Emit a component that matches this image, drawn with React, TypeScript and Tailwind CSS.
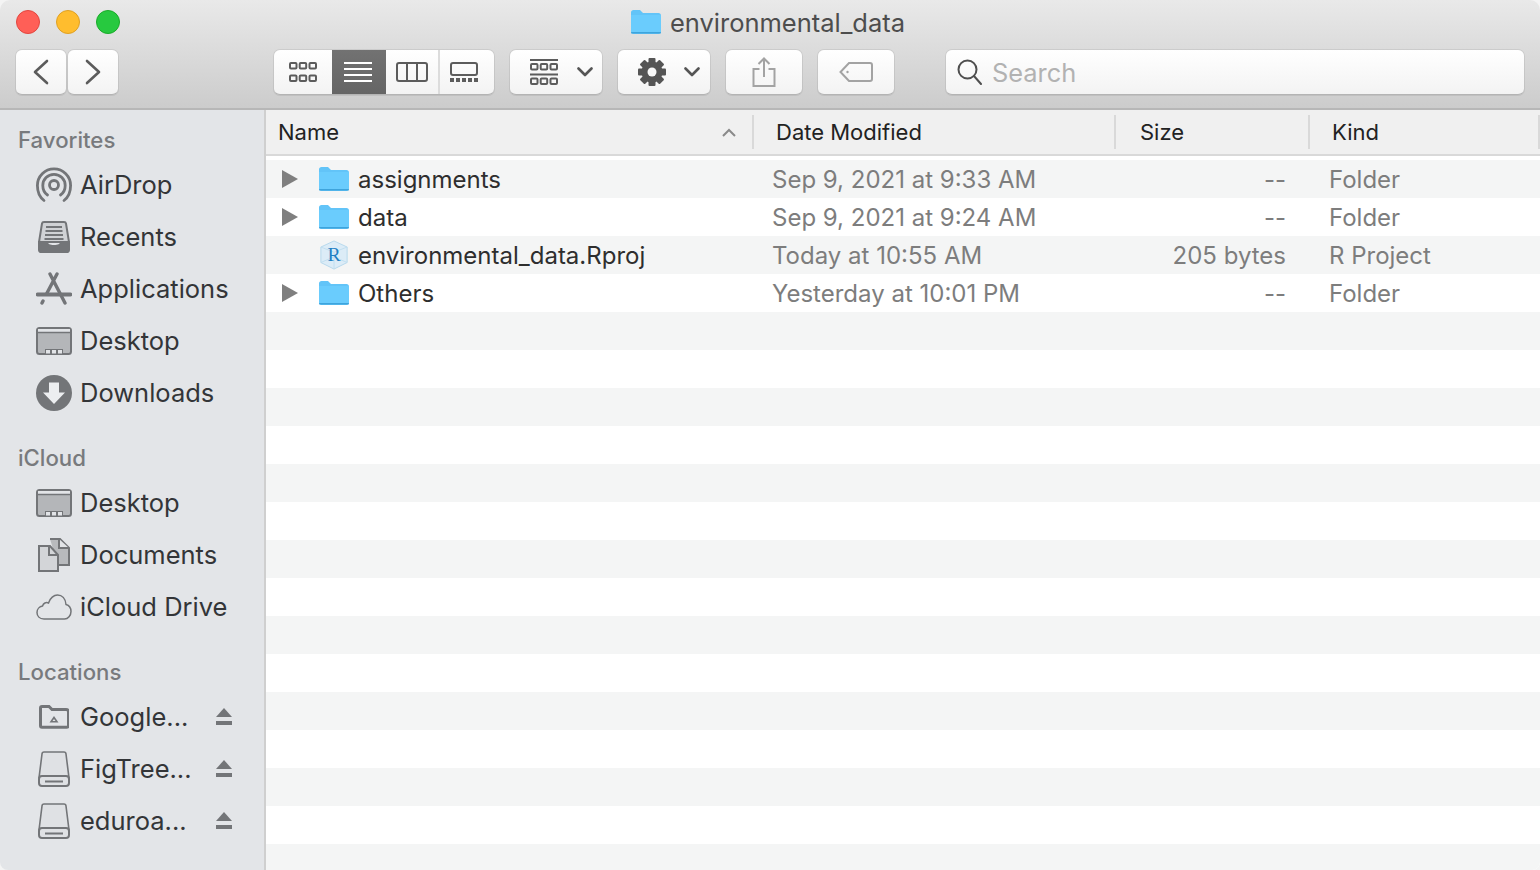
import type { ReactNode } from "react";

const btn =
  "flex h-[45px] items-center rounded-[6px] border-b border-[#b4b4b4] bg-gradient-to-b from-white to-[#f3f3f3] shadow-[0_0_0_1px_rgba(0,0,0,0.07)]";

function FolderIcon({ w = 30, h = 24 }: { w?: number; h?: number }) {
  return (
    <svg width={w} height={h} viewBox="0 0 30 24">
      <path d="M0 2.500C0 1 1 0 2.500 0h6.500l3 3h15.500C29 3 30 4 30 5.500v16c0 1.500-1 2.500-2.500 2.500h-25C1 24 0 23 0 21.500Z" fill="#62c4f8" />
      <path d="M0 5h30v16.500c0 1-.8 1.500-1.700 1.500H1.700C.8 23 0 22.500 0 21.500Z" fill="#6accfd" />
      <rect x="0" y="22" width="30" height="1.500" rx=".7" fill="#3ea4dc" />
    </svg>
  );
}

function RprojIcon() {
  return (
    <svg width="30" height="30" viewBox="0 0 32 32">
      <path d="M16 1 30 7.500V24L16 31 2 24V7.500Z" fill="#dcecf7" stroke="#b5d8ec" />
      <path d="M2 7.500 16 13l14-5.500M16 13v18M2 24l14-6 14 6" fill="none" stroke="#c0deef" />
      <text x="16" y="22" textAnchor="middle" fontSize="21" fill="#1f80c4" fontFamily="Liberation Serif, serif">
        R
      </text>
    </svg>
  );
}

function Tri() {
  return (
    <svg width="16" height="18" viewBox="0 0 16 18">
      <path d="M0 0 16 9 0 18Z" fill="#7f7f7f" />
    </svg>
  );
}

function AirDropIcon() {
  return (
    <svg width="36" height="36" viewBox="0 0 36 36" fill="none" stroke="#737578" strokeWidth="2.800" strokeLinecap="round">
      <path d="M8 33.500C3.500 30 1.400 24.500 1.400 18.500a16.600 16.600 0 0 1 33.200 0c0 6-2.100 11.500-6.600 15" />
      <path d="M11.500 28C8.500 26 6.800 22.500 6.800 18.500a11.200 11.200 0 0 1 22.400 0c0 4-1.700 7.500-4.700 9.500" />
      <circle cx="18" cy="18" r="4.500" />
    </svg>
  );
}

function RecentsIcon() {
  return (
    <svg width="32" height="32" viewBox="0 0 32 32" fill="none">
      <path d="M4 2.500C4.200 1.500 5 1 6 1h20c1 0 1.800.5 2 1.500L31 21H1Z" fill="#d0d2d5" stroke="#737578" strokeWidth="2" />
      <path d="M8 6h16M7.500 10h17M7 14h18M6.500 18h19" stroke="#737578" strokeWidth="1.800" />
      <path d="M0 20h9c1 3 3 4 7 4s6-1 7-4h9v9c0 1.500-1 3-2.500 3h-27C1 32 0 30.500 0 29Z" fill="#737578" />
    </svg>
  );
}

function ApplicationsIcon() {
  return (
    <svg width="36" height="34" viewBox="0 0 36 34" fill="none" stroke="#737578" strokeLinecap="round">
      <path d="M14 2 29 31M21 2 11 21M7 29l-1 2" strokeWidth="3.400" />
      <path d="M1.500 22.500h33" strokeWidth="3.800" />
    </svg>
  );
}

function DesktopIcon() {
  return (
    <svg width="36" height="28" viewBox="0 0 36 28">
      <rect x="1" y="1" width="34" height="26" rx="2.500" fill="#b4b6b9" stroke="#737578" strokeWidth="2" />
      <rect x="2" y="2" width="32" height="3" fill="#e2e4e7" />
      <path d="M2 5.500h32" stroke="#737578" strokeWidth="1.500" />
      <path d="M9 27v-5h18v5Z" fill="#737578" />
      <path d="M10 23h4v3.500h-4ZM16 23h4v3.500h-4ZM22 23h4v3.500h-4Z" fill="#e2e4e7" />
    </svg>
  );
}

function DownloadsIcon() {
  return (
    <svg width="36" height="36" viewBox="0 0 36 36">
      <circle cx="18" cy="18" r="18" fill="#737578" />
      <path d="M13 7.500h10v10h6L18 29 7 17.500h6Z" fill="#eceef0" />
    </svg>
  );
}

function DocumentsIcon() {
  return (
    <svg width="32" height="34" viewBox="0 0 32 34" fill="none" stroke="#737578" strokeWidth="2">
      <path d="M12 1h10l9 9v17H20" fill="#b8babd" />
      <path d="M21 1v9h10" fill="#e2e4e7" />
      <path d="M1 8h11l8 9v16H1Z" fill="#d3d5d8" />
      <path d="M11 8v9h9" />
    </svg>
  );
}

function CloudIcon() {
  return (
    <svg width="36" height="26" viewBox="0 0 36 26" fill="none">
      <path
        d="M8 25C3.500 25 1 22 1 18.500c0-3.500 2.500-6 5.500-6.500C7.500 9 10 8 12.500 9 14 4 18 1 21.500 1c4.500 0 8 3.500 8.500 9.500 3.500 1 5 4 5 7 0 4-3 7.500-6.500 7.500Z"
        stroke="#737578"
        strokeWidth="1.500"
      />
    </svg>
  );
}

function DriveFolderIcon() {
  return (
    <svg width="30" height="24" viewBox="0 0 30 24" fill="none">
      <path d="M1.500 3c0-1 .6-1.500 1.500-1.500h7l3 3h14c1.200 0 2.500.6 2.500 2v14c0 1.200-.8 1.800-2 1.800H3c-1.200 0-1.500-.6-1.500-1.800Z" stroke="#737578" strokeWidth="3" />
      <path d="M15 11 19.500 17.500h-9Z" fill="#737578" />
      <path d="M15 14 16.500 16h-3Z" fill="#e3e5e8" />
    </svg>
  );
}

function DiskIcon() {
  return (
    <svg width="32" height="36" viewBox="0 0 32 36" fill="none">
      <path d="M4 3c.1-1.200 1-2 2-2h20c1 0 1.900.8 2 2l3 24H1Z" fill="#dfe1e4" stroke="#737578" strokeWidth="1.600" />
      <rect x="1" y="25" width="30" height="10" rx="3" fill="#dfe1e4" stroke="#737578" strokeWidth="2" />
      <path d="M7 30.500h18" stroke="#737578" strokeWidth="2" />
    </svg>
  );
}

function EjectIcon() {
  return (
    <svg width="16" height="18" viewBox="0 0 16 18">
      <path d="M8 0 16 9H0Z" fill="#737578" />
      <rect x="0" y="13" width="16" height="4" fill="#737578" />
    </svg>
  );
}

function Chevron({ dir }: { dir: "left" | "right" }) {
  return (
    <svg width="16" height="26" viewBox="0 0 16 26" fill="none" stroke="#5c5c5c" strokeWidth="2.600" strokeLinecap="round" strokeLinejoin="round">
      <path d={dir === "left" ? "M14 2 2 13l12 11" : "M2 2l12 11L2 24"} />
    </svg>
  );
}

function Caret() {
  return (
    <svg width="16" height="10" viewBox="0 0 16 10" fill="none" stroke="#555" strokeWidth="2.600" strokeLinecap="round" strokeLinejoin="round">
      <path d="M1.500 1.500 8 8l6.500-6.500" />
    </svg>
  );
}

function SmallSquares({ y }: { y: number }) {
  return (
    <g fill="none" stroke="#5c5c5c" strokeWidth="2">
      <rect x="1" y={y} width="6.500" height="5.500" rx="1" />
      <rect x="10.700" y={y} width="6.500" height="5.500" rx="1" />
      <rect x="20.500" y={y} width="6.500" height="5.500" rx="1" />
    </g>
  );
}

function GearIcon() {
  const teeth = [0, 45, 90, 135];
  return (
    <svg width="28" height="28" viewBox="0 0 28 28">
      {teeth.map((a) => (
        <rect key={a} x="10.500" y="0" width="7" height="28" rx="1" fill="#555" transform={`rotate(${a} 14 14)`} />
      ))}
      <circle cx="14" cy="14" r="10.500" fill="#555" />
      <circle cx="14" cy="14" r="4.500" fill="#f8f8f8" />
    </svg>
  );
}

function ToolButton({ width, children }: { width: string; children: ReactNode }) {
  return <div className={`${btn} ${width} justify-center`}>{children}</div>;
}

function SidebarHeading({ children, className = "" }: { children: ReactNode; className?: string }) {
  return (
    <div className={`flex h-[38px] items-center pl-[18px] text-[22.200px] font-medium text-[#787a7d] ${className}`}>{children}</div>
  );
}

function SidebarRow({ icon, label, eject }: { icon: ReactNode; label: string; eject?: boolean }) {
  return (
    <div className="flex h-[52px] items-center pr-[32px]">
      <div className="flex w-[80px] shrink-0 items-center justify-center pl-[28px]">{icon}</div>
      <span className="flex-1 text-[25.500px] text-[#333538]">{label}</span>
      {eject && <EjectIcon />}
    </div>
  );
}

const files = [
  { name: "assignments", date: "Sep 9, 2021 at 9:33 AM", size: "--", kind: "Folder", folder: true },
  { name: "data", date: "Sep 9, 2021 at 9:24 AM", size: "--", kind: "Folder", folder: true },
  { name: "environmental_data.Rproj", date: "Today at 10:55 AM", size: "205 bytes", kind: "R Project", folder: false },
  { name: "Others", date: "Yesterday at 10:01 PM", size: "--", kind: "Folder", folder: true },
];

const stripes = [0, 1, 2, 3, 4, 5, 6, 7, 8, 9, 10, 11, 12, 13, 14, 15, 16, 17];

export default function App() {
  return (
    <div className="h-[870px] w-[1540px] overflow-hidden bg-[#f4f4f4] font-['Inter','Liberation_Sans',sans-serif]">
      <div className="flex h-full flex-col overflow-hidden rounded-t-[10px] rounded-b-[8px]">
        <header className="h-[110px] shrink-0 border-b-2 border-[#b7b7b7] bg-gradient-to-b from-[#e9e9e9] to-[#cccccc]">
          <div className="grid h-[50px] grid-cols-[1fr_auto_1fr] items-center pb-[6px]">
            <div className="flex gap-[16px] pl-[16px]">
              <span className="h-[24px] w-[24px] rounded-full border border-[#e2463f] bg-[#ff5f57]" />
              <span className="h-[24px] w-[24px] rounded-full border border-[#dfa023] bg-[#ffbd2e]" />
              <span className="h-[24px] w-[24px] rounded-full border border-[#1aab29] bg-[#27c93f]" />
            </div>
            <div className="flex items-center gap-[9px] pr-[4px] text-[25.500px] text-[#4d4d4d]">
              <FolderIcon />
              <span className="pt-[2px]">environmental_data</span>
            </div>
            <div />
          </div>
          <div className="flex h-[45px] pl-[16px]">
            <div className="flex gap-[2px]">
              <ToolButton width="w-[50px]">
                <Chevron dir="left" />
              </ToolButton>
              <ToolButton width="w-[50px]">
                <Chevron dir="right" />
              </ToolButton>
            </div>
            <div className={`${btn} ml-[156px] w-[220px] overflow-hidden`}>
              <div className="flex h-full w-[58px] items-center justify-center">
                <svg width="28" height="20" viewBox="0 0 28 20">
                  <SmallSquares y={1} />
                  <SmallSquares y={13.500} />
                </svg>
              </div>
              <div className="flex h-full w-[54px] items-center justify-center bg-gradient-to-b from-[#727272] to-[#656565] pr-[2px]">
                <svg width="28" height="20" viewBox="0 0 28 20" stroke="#fff" strokeWidth="2">
                  <path d="M0 1h28M0 7h28M0 13h28M0 19h28" />
                </svg>
              </div>
              <div className="flex h-full w-[54px] items-center justify-center border-r-2 border-[#dcdcdc]">
                <svg width="32" height="20" viewBox="0 0 32 20" fill="none" stroke="#5c5c5c" strokeWidth="2">
                  <rect x="1" y="1" width="30" height="18" rx="2" />
                  <path d="M11 1v18M21 1v18" />
                </svg>
              </div>
              <div className="flex h-full flex-1 items-center justify-center pr-[6px]">
                <svg width="28" height="20" viewBox="0 0 28 20">
                  <rect x="1" y="1" width="26" height="12" rx="2" fill="none" stroke="#5c5c5c" strokeWidth="2" />
                  <path d="M0 16h4v4H0ZM6 16h4v4H6ZM12 16h4v4h-4ZM18 16h4v4h-4ZM24 16h4v4h-4Z" fill="#5c5c5c" />
                </svg>
              </div>
            </div>
            <div className={`${btn} ml-[16px] w-[92px] gap-[19px] pl-[20px]`}>
              <svg width="28" height="26" viewBox="0 0 28 26">
                <path d="M0 1h28M0 15.500h28" stroke="#5c5c5c" strokeWidth="2" />
                <SmallSquares y={5} />
                <SmallSquares y={19.500} />
              </svg>
              <Caret />
            </div>
            <div className={`${btn} ml-[16px] w-[92px] gap-[18px] pl-[20px]`}>
              <GearIcon />
              <Caret />
            </div>
            <ToolButton width="ml-[16px] w-[76px]">
              <svg width="24" height="30" viewBox="0 0 24 30" fill="none" stroke="#a3a3a3" strokeWidth="2">
                <path d="M7.500 12H1.500v17h21V12h-6" />
                <path d="M12 20V1.500M6.500 7 12 1.500 17.500 7" />
              </svg>
            </ToolButton>
            <ToolButton width="ml-[16px] w-[76px]">
              <svg width="34" height="20" viewBox="0 0 34 20" fill="none" stroke="#a3a3a3" strokeWidth="2">
                <path d="M10 1h21c1.200 0 2 .8 2 2v14c0 1.200-.8 2-2 2H10L1.500 10Z" />
                <circle cx="8.500" cy="10" r="1.200" fill="#a3a3a3" stroke="none" />
              </svg>
            </ToolButton>
            <div className={`${btn} ml-[52px] w-[578px] gap-[10px] pl-[11px]`}>
              <svg width="25" height="26" viewBox="0 0 25 26" fill="none" stroke="#4f4f4f" strokeWidth="2">
                <circle cx="10.500" cy="10.500" r="9" />
                <path d="m17 17 7 8" strokeLinecap="round" />
              </svg>
              <span className="pt-[2px] text-[25.400px] text-[#b2b2b2]">Search</span>
            </div>
          </div>
        </header>

        <div className="flex min-h-0 flex-1">
          <aside className="w-[266px] shrink-0 border-r-2 border-[#cfcfcf] bg-[#e3e5e8] pt-[11px]">
            <SidebarHeading>Favorites</SidebarHeading>
            <SidebarRow icon={<AirDropIcon />} label="AirDrop" />
            <SidebarRow icon={<RecentsIcon />} label="Recents" />
            <SidebarRow icon={<ApplicationsIcon />} label="Applications" />
            <SidebarRow icon={<DesktopIcon />} label="Desktop" />
            <SidebarRow icon={<DownloadsIcon />} label="Downloads" />
            <SidebarHeading className="mt-[20px]">iCloud</SidebarHeading>
            <SidebarRow icon={<DesktopIcon />} label="Desktop" />
            <SidebarRow icon={<DocumentsIcon />} label="Documents" />
            <SidebarRow icon={<CloudIcon />} label="iCloud Drive" />
            <SidebarHeading className="mt-[20px]">Locations</SidebarHeading>
            <SidebarRow icon={<DriveFolderIcon />} label="Google..." eject />
            <SidebarRow icon={<DiskIcon />} label="FigTree..." eject />
            <SidebarRow icon={<DiskIcon />} label="eduroa..." eject />
          </aside>

          <main className="min-w-0 flex-1 bg-white">
            <div className="flex h-[46px] items-center border-b-2 border-[#d9d9d9] bg-[#f0f0f0] text-[22px] text-[#222]">
              <div className="flex h-[34px] w-[488px] items-center justify-between border-r-2 border-[#d9d9d9] pl-[12px] pr-[16px]">
                <span>Name</span>
                <svg width="14" height="9" viewBox="0 0 14 9" fill="none" stroke="#8a8a8a" strokeWidth="2">
                  <path d="M1 8 7 2l6 6" />
                </svg>
              </div>
              <div className="flex h-[34px] w-[362px] items-center border-r-2 border-[#d9d9d9] pl-[22px]">Date Modified</div>
              <div className="flex h-[34px] w-[194px] items-center border-r-2 border-[#d9d9d9] pl-[24px]">Size</div>
              <div className="flex h-[34px] w-[230px] items-center border-r-2 border-[#d9d9d9] pl-[22px]">Kind</div>
            </div>
            <div className="pt-[4px]">
              {files.map((f, i) => (
                <div key={f.name} className={`flex h-[38px] items-center whitespace-nowrap text-[24px] ${i % 2 === 0 ? "bg-[#f4f5f5]" : "bg-white"}`}>
                  <div className="flex w-[53px] shrink-0 justify-center pr-[5px]">{f.folder && <Tri />}</div>
                  <div className="flex w-[30px] shrink-0 justify-center">{f.folder ? <FolderIcon /> : <RprojIcon />}</div>
                  <span className="w-[423px] shrink-0 pl-[9px] pt-[2px] text-[#2e2e2e]">{f.name}</span>
                  <span className="w-[400px] shrink-0 pt-[2px] text-[#7d7d7d]">{f.date}</span>
                  <span className="w-[114px] shrink-0 pt-[2px] text-right text-[#7d7d7d]">{f.size}</span>
                  <span className="pl-[43px] pt-[2px] text-[#7d7d7d]">{f.kind}</span>
                </div>
              ))}
              {stripes.map((n) => (
                <div key={n} className={`h-[38px] ${n % 2 === 0 ? "bg-[#f4f5f5]" : "bg-white"}`} />
              ))}
            </div>
          </main>
        </div>
      </div>
    </div>
  );
}
